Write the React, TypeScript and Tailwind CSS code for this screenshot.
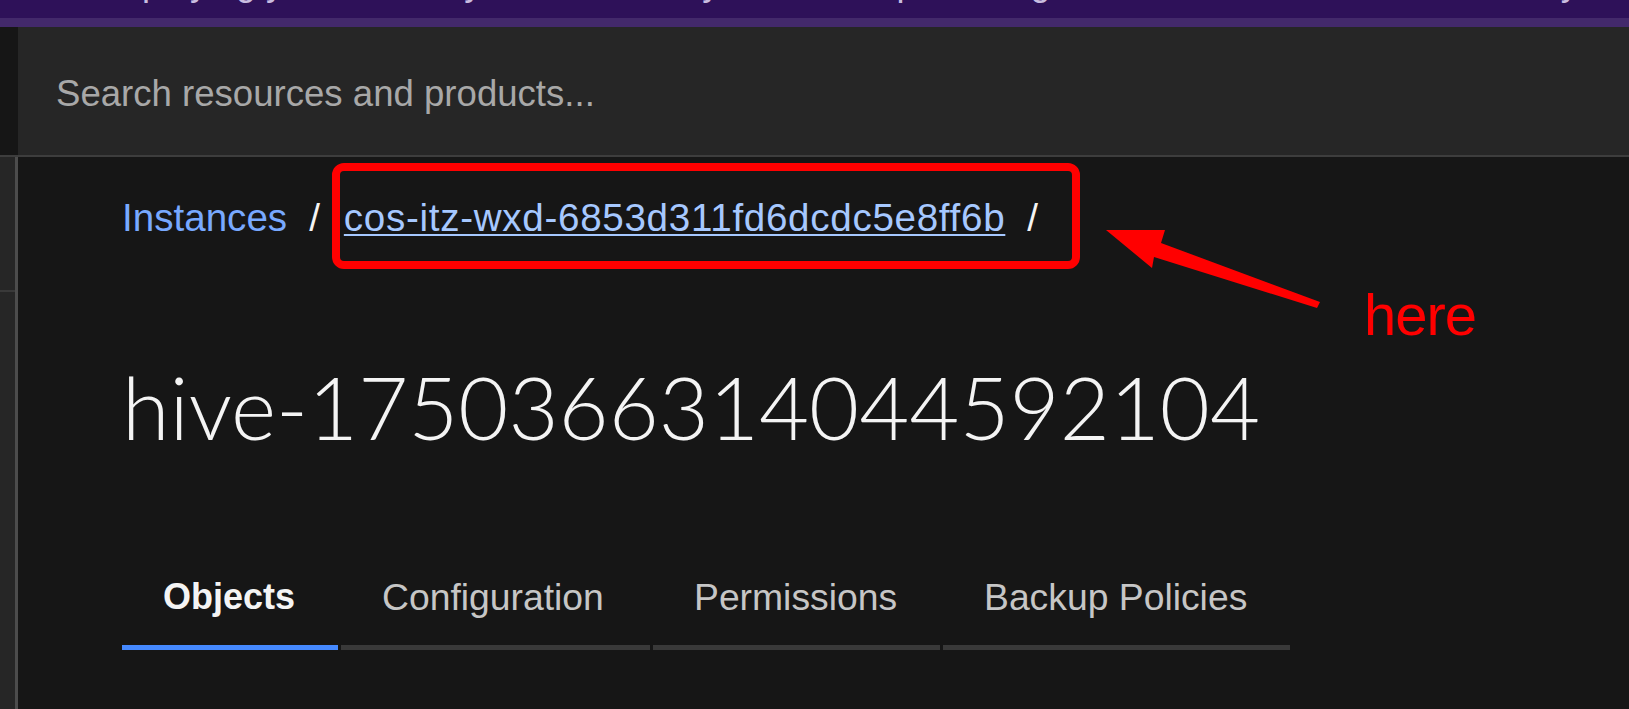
export default function App() {
  const tabs = [
    { label: "Objects", w: "w-[216px]", active: true },
    { label: "Configuration", w: "w-[309px]", active: false },
    { label: "Permissions", w: "w-[287px]", active: false },
    { label: "Backup Policies", w: "w-[347px]", active: false },
  ]

  return (
    <div className="relative flex h-[709px] w-full flex-col overflow-hidden bg-[#161616] font-['Liberation_Sans',Arial,sans-serif]">
      {/* banner (cut off at the top) */}
      <div className="h-[18px] shrink-0 overflow-hidden bg-[#2e1159]">
        <p className="-mt-[39px] whitespace-nowrap pl-[96px] text-[36px] leading-[44px] text-[#c9bde0]">
          Deploying your trial may take a while, you can keep working in the meantime and we will let you know.
        </p>
      </div>
      <div className="h-[9px] shrink-0 bg-[#43296b]" />

      {/* search header */}
      <div className="flex h-[128px] shrink-0">
        <div className="w-[18px] bg-[#161616]" />
        <div className="flex flex-1 items-center bg-[#262626] pl-[38px] pt-[7px]">
          <span className="text-[36.6px] leading-none text-[#a8a8a8]">Search resources and products...</span>
        </div>
      </div>
      <div className="h-[2px] shrink-0 bg-[#3d3d3d]" />

      <div className="flex flex-1">
        {/* side rail */}
        <div className="flex w-[15px] flex-col bg-[#262626]">
          <div className="h-[133px]" />
          <div className="h-[2px] bg-[#393939]" />
        </div>
        <div className="w-[3px] bg-[#4c4c4c]" />

        {/* main */}
        <div className="flex-1 pl-[104px] pt-[39px]">
          <nav className="flex items-center text-[38.6px] leading-[44px]">
            <span className="text-[#78a9ff]">Instances</span>
            <span className="ml-[22px] mr-[24px] text-[#f4f4f4]">/</span>
            <span className="tracking-[0.7px] text-[#a6c8ff] underline decoration-[1.5px] underline-offset-[3px]">
              cos-itz-wxd-6853d311fd6dcdc5e8ff6b
            </span>
            <span className="mx-[22px] text-[#f4f4f4]">/</span>
          </nav>

          <h1 className="mt-[124px] font-['Lato',sans-serif] text-[86.4px] font-light leading-none text-[#f4f4f4]">
            hive-1750366314044592104
          </h1>

          <div className="mt-[125px] flex gap-[3px]">
            {tabs.map((t) => (
              <div
                key={t.label}
                className={
                  t.active
                    ? `${t.w} border-b-[5px] border-[#4589ff] pb-[26px] pl-[41px] text-[36px] font-bold leading-[44px] text-[#f4f4f4]`
                    : `${t.w} border-b-[5px] border-[#393939] pb-[26px] pl-[41px] text-[37.3px] leading-[44px] text-[#c6c6c6]`
                }
              >
                {t.label}
              </div>
            ))}
          </div>
        </div>
      </div>

      {/* annotation overlay */}
      <div className="absolute left-[332px] top-[163px] h-[106px] w-[748px] rounded-[12px] border-[8px] border-[#ff0000]" />
      <svg className="absolute left-[1100px] top-[225px]" width="225" height="90" viewBox="0 0 225 90">
        <polygon points="6,5 65,5 61,18 220,77 217,83 54,32 52,43" fill="#ff0000" />
      </svg>
      <span className="absolute left-[1364px] top-[286px] text-[58px] leading-none tracking-[-1px] text-[#ff0000]">
        here
      </span>
    </div>
  )
}
